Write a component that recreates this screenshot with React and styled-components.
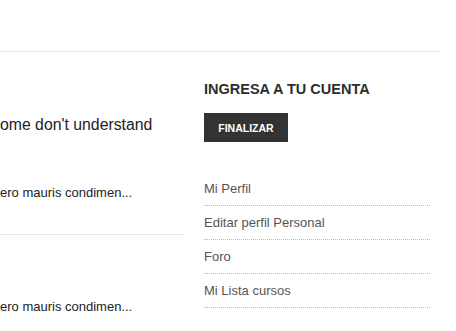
import React from "react";
import styled, { createGlobalStyle } from "styled-components";

const GlobalStyle = createGlobalStyle`
  html, body {
    margin: 0;
    padding: 0;
    background: #fff;
  }
  body {
    font-family: "Liberation Sans", Arial, sans-serif;
    color: #222;
  }
`;

const Page = styled.div`
  width: 440px;
`;

const TopBar = styled.div`
  height: 51px;
  border-bottom: 1px solid #efebe1;
`;

const Content = styled.div`
  display: grid;
  grid-template-columns: 184px 226px;
  column-gap: 20px;
`;

const Posts = styled.div`
  display: flex;
  flex-direction: column;
`;

const Post = styled.article`
  padding-top: ${(p) => p.$top}px;
  padding-bottom: 33px;
  border-bottom: ${(p) => (p.$last ? "none" : "1px solid #ece9e1")};
`;

const PostTitle = styled.h2`
  margin: 0 0 50px;
  font-size: 15.8px;
  line-height: 20px;
  font-weight: normal;
  color: #222;
  white-space: nowrap;
`;

const Excerpt = styled.p`
  margin: 0;
  font-size: 13px;
  line-height: 16px;
  color: #222;
  white-space: nowrap;
`;

const Sidebar = styled.aside`
  padding-top: 29px;
`;

const WidgetTitle = styled.h3`
  margin: 0 0 16px;
  font-size: 14.5px;
  line-height: 16px;
  font-weight: bold;
  color: #2e2e2e;
  text-transform: uppercase;
`;

const Button = styled.button`
  display: block;
  width: 84px;
  height: 29px;
  padding: 0;
  border: none;
  background: #333;
  color: #fff;
  font-family: "Liberation Sans", Arial, sans-serif;
  font-size: 10.5px;
  font-weight: bold;
  text-transform: uppercase;
  cursor: pointer;
`;

const Menu = styled.ul`
  list-style: none;
  margin: 30px 0 0;
  padding: 0;
`;

const MenuItem = styled.li`
  padding: 9px 0 8px;
  font-size: 13px;
  line-height: 16px;
  color: #555;
  border-bottom: 1px dotted #bbb;
`;

const menu = ["Mi Perfil", "Editar perfil Personal", "Foro", "Mi Lista cursos"];

export default function App() {
  return (
    <>
      <GlobalStyle />
      <Page>
        <TopBar />
        <Content>
          <Posts>
            <Post $top={63}>
              <PostTitle>ome don't understand</PostTitle>
              <Excerpt>ero mauris condimen...</Excerpt>
            </Post>
            <Post $top={64} $last>
              <Excerpt>ero mauris condimen...</Excerpt>
            </Post>
          </Posts>
          <Sidebar>
            <WidgetTitle>Ingresa a tu cuenta</WidgetTitle>
            <Button>Finalizar</Button>
            <Menu>
              {menu.map((item) => (
                <MenuItem key={item}>{item}</MenuItem>
              ))}
            </Menu>
          </Sidebar>
        </Content>
      </Page>
    </>
  );
}
